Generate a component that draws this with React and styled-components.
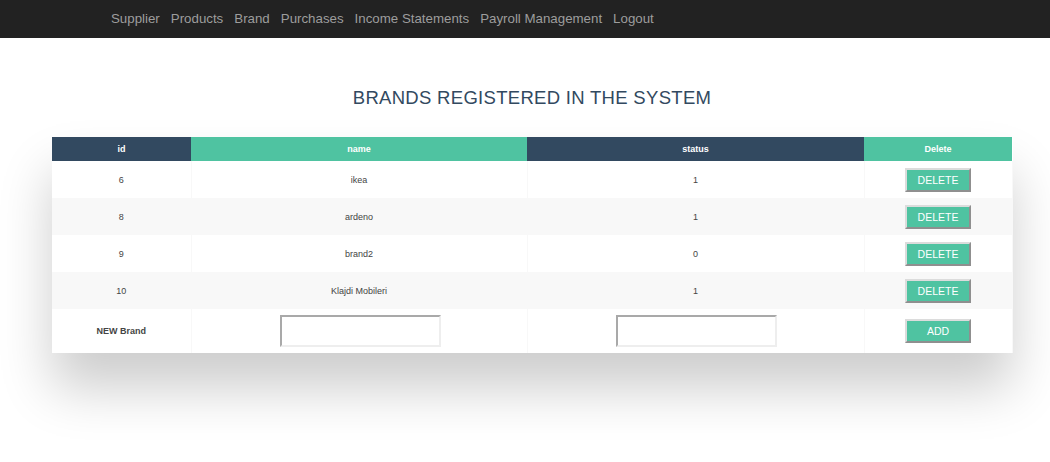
import React from "react";
import styled, { createGlobalStyle } from "styled-components";

const GlobalStyle = createGlobalStyle`
  body {
    margin: 0;
    background: #fff;
    font-family: "Liberation Sans", Arial, sans-serif;
  }
`;

const brands = [
  { id: 6, name: "ikea", status: 1 },
  { id: 8, name: "ardeno", status: 1 },
  { id: 9, name: "brand2", status: 0 },
  { id: 10, name: "Klajdi Mobileri", status: 1 },
];

const links = [
  "Supplier",
  "Products",
  "Brand",
  "Purchases",
  "Income Statements",
  "Payroll Management",
  "Logout",
];

const App = () => {
  return (
    <>
      <GlobalStyle />
      <Navbar>
        {links.map((l) => (
          <NavLink key={l} href="#">
            {l}
          </NavLink>
        ))}
      </Navbar>

      <Titulo>Brands registered in the system</Titulo>

      <TablaWrapper>
        <Tabla>
          <colgroup>
            <col style={{ width: "139px" }} />
            <col style={{ width: "336px" }} />
            <col style={{ width: "337px" }} />
            <col style={{ width: "148px" }} />
          </colgroup>
          <thead>
            <tr>
              <Th>id</Th>
              <Th>name</Th>
              <Th>status</Th>
              <Th>Delete</Th>
            </tr>
          </thead>
          <tbody>
            {brands.map((b) => (
              <Fila key={b.id}>
                <Td>{b.id}</Td>
                <Td>{b.name}</Td>
                <Td>{b.status}</Td>
                <Td>
                  <Boton>DELETE</Boton>
                </Td>
              </Fila>
            ))}
            <Fila nueva>
              <Td bold>NEW Brand</Td>
              <Td>
                <Campo type="text" />
              </Td>
              <Td>
                <Campo type="text" />
              </Td>
              <Td>
                <Boton>ADD</Boton>
              </Td>
            </Fila>
          </tbody>
        </Tabla>
      </TablaWrapper>
    </>
  );
};

const Navbar = styled.nav`
  height: 38px;
  background-color: #222;
  display: flex;
  align-items: center;
  padding-left: 111px;
  gap: 11px;
  box-sizing: border-box;
`;

const NavLink = styled.a`
  color: #9d9d9d;
  font-size: 13.3px;
  text-decoration: none;
  line-height: 20px;
`;

const Titulo = styled.h2`
  margin: 49px 0 0;
  height: 50px;
  text-align: center;
  text-transform: uppercase;
  font-weight: normal;
  font-size: 18.5px;
  letter-spacing: 0.3px;
  color: #324960;
  padding-left: 14px;
`;

const TablaWrapper = styled.div`
  margin: 0 38px 90px 52px;
  width: 960px;
  box-shadow: 0px 35px 50px rgba(0, 0, 0, 0.2);
`;

const Tabla = styled.table`
  width: 960px;
  border-collapse: collapse;
  table-layout: fixed;
  background-color: #fff;
  font-size: 9px;
  white-space: nowrap;
`;

const Th = styled.th`
  height: 24px;
  padding: 0;
  text-align: center;
  color: #fff;
  font-weight: bold;
  font-size: 9px;
  background-color: #4fc3a1;

  &:nth-child(odd) {
    background-color: #324960;
  }
`;

const Fila = styled.tr`
  height: ${(p) => (p.nueva ? "44px" : "37px")};

  &:nth-child(even) {
    background-color: #f8f8f8;
  }
`;

const Td = styled.td`
  padding: 0;
  text-align: center;
  color: #444;
  font-weight: ${(p) => (p.bold ? "bold" : "normal")};
  border-right: 1px solid #f8f8f8;
  vertical-align: middle;
`;

const Boton = styled.button`
  width: 66px;
  height: 24px;
  padding: 0;
  background-color: #4fc3a1;
  color: #fff;
  font-family: "Liberation Sans", Arial, sans-serif;
  font-size: 10.5px;
  border: 2px solid;
  border-color: #dcdcdc #8f8f8f #8f8f8f #dcdcdc;
  vertical-align: middle;
`;

const Campo = styled.input`
  width: 161px;
  height: 32px;
  box-sizing: border-box;
  border: 2px solid;
  border-color: #a9a9a9 #eeeeee #eeeeee #a9a9a9;
  background: #fff;
  vertical-align: middle;
  margin-left: 2px;
`;

export default App;
